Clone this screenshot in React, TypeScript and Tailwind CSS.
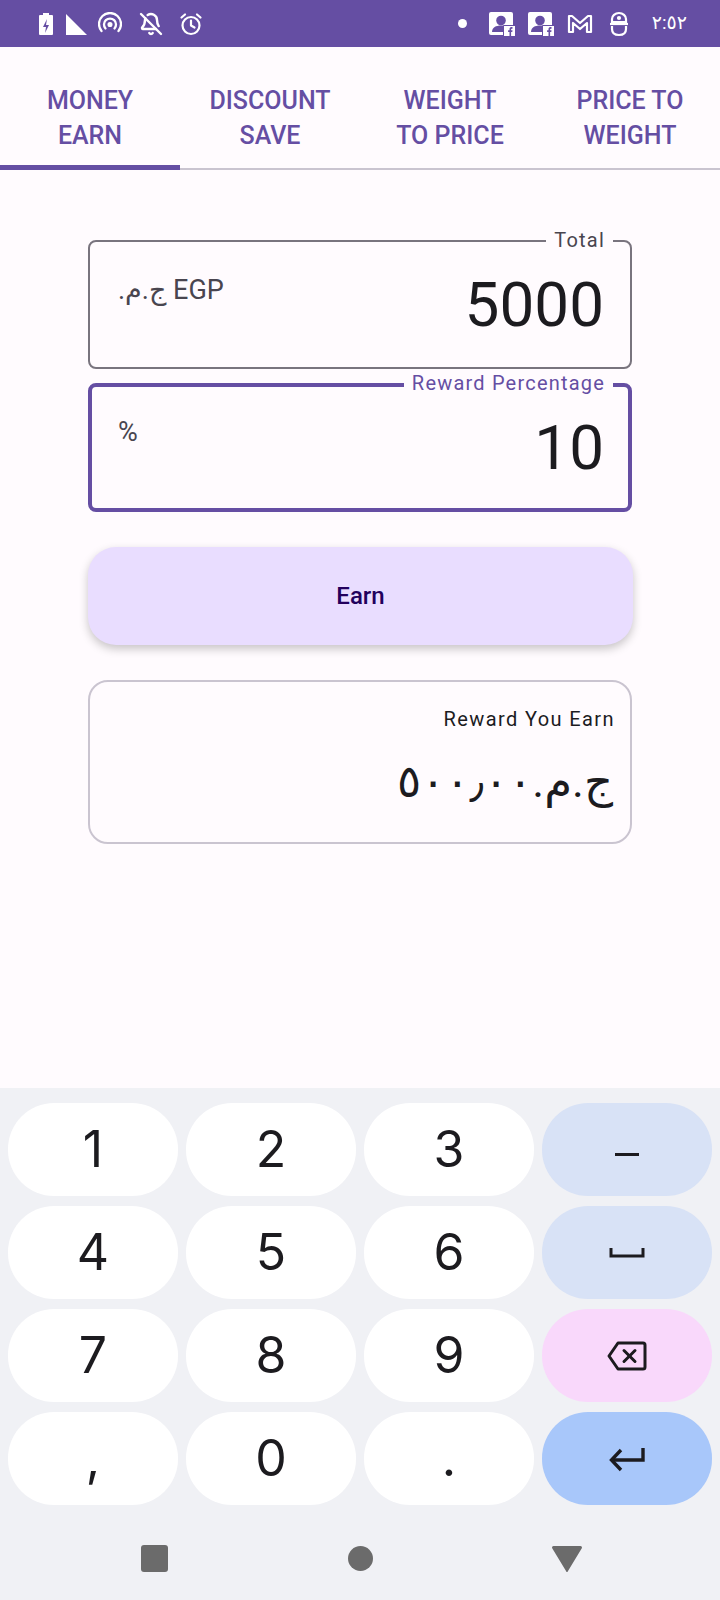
import React from 'react';
import { BellOff } from 'lucide-react';

const tabs = [
  ['MONEY', 'EARN'],
  ['DISCOUNT', 'SAVE'],
  ['WEIGHT', 'TO PRICE'],
  ['PRICE TO', 'WEIGHT'],
];

function FbContact() {
  return (
    <svg width="26" height="24" viewBox="0 0 26 24">
      <rect x="0" y="0" width="24" height="23" rx="2" fill="#fff" />
      <circle cx="12" cy="8.500" r="4.800" fill="#654ea3" />
      <path d="M3 20c0-4.500 4-6.500 9-6.500 2 0 3.500.4 5 1.200V20z" fill="#654ea3" />
      <rect x="14" y="13" width="12" height="11" rx="1" fill="#654ea3" />
      <rect x="15" y="14" width="11" height="10" fill="#fff" />
      <path d="M20.500 24v-4h-1.400v-1.700h1.400v-1.200c0-1.300.8-2 2-2h1v1.600h-.7c-.5 0-.7.2-.7.6v1h1.400l-.2 1.700h-1.200v4z" fill="#654ea3" />
    </svg>
  );
}

function StatusBar() {
  return (
    <div className="h-[47px] bg-[#654ea3] flex items-center pl-[38px] pr-[33px] text-white shrink-0">
      <svg width="16" height="24" viewBox="0 0 16 24">
        <path d="M5 1h6v2h3a1 1 0 0 1 1 1v18a1 1 0 0 1-1 1H2a1 1 0 0 1-1-1V4a1 1 0 0 1 1-1h3z" fill="#fff" />
        <path d="M9 7l-4 8h3l-1 6 4-8H8z" fill="#654ea3" />
      </svg>
      <svg className="ml-[10px]" width="24" height="24" viewBox="0 0 24 24">
        <path d="M2 2l21 21H2z" fill="#fff" />
      </svg>
      <svg className="ml-[10px]" width="24" height="24" viewBox="0 0 24 24" fill="none" stroke="#fff" strokeWidth="2.300" strokeLinecap="round">
        <path d="M3.500 19a11 11 0 1 1 17 0" />
        <path d="M7.500 16.500a6 6 0 1 1 9 0" />
        <circle cx="12" cy="12.500" r="1.400" fill="#fff" />
      </svg>
      <BellOff className="ml-[17px]" size={24} strokeWidth={2.400} />
      <svg className="ml-[16px]" width="24" height="24" viewBox="0 0 24 24" fill="none" stroke="#fff" strokeWidth="2.200" strokeLinecap="round" strokeLinejoin="round">
        <circle cx="12" cy="13.500" r="8.500" />
        <path d="M12 8.500v5l3.500 2" />
        <path d="M2.500 5.500L6 2.500" />
        <path d="M21.500 5.500L18 2.500" />
      </svg>
      <div className="flex-1" />
      <div className="w-[9px] h-[9px] rounded-full bg-white mr-[22px]" />
      <FbContact />
      <div className="w-[13px]" />
      <FbContact />
      <svg className="ml-[13px]" width="26" height="24" viewBox="0 0 26 24" fill="none" stroke="#fff" strokeWidth="2.200" strokeLinejoin="round">
        <path d="M2 4h3l8 7 8-7h3v16h-4V11l-7 6-7-6v9H2z" />
      </svg>
      <svg className="ml-[17px]" width="18" height="26" viewBox="0 0 18 26" fill="none" stroke="#fff" strokeWidth="2.200">
        <path d="M2 8c0-3 3-6 7-6s7 3 7 6v3H2z" />
        <path d="M2 15v3c0 4 3 6 7 6s7-2 7-6v-3" />
        <path d="M0 13h18" />
        <circle cx="9" cy="7" r="1" fill="#fff" />
      </svg>
      <span className="ml-[24px] text-[19px] tracking-[1px]">٢:٥٢</span>
    </div>
  );
}

function Tabs() {
  return (
    <div className="flex h-[123px] border-b-2 border-[#cac4d0] shrink-0">
      {tabs.map((t, i) => (
        <div key={i} className="relative w-[180px] pt-[36px] text-center text-[#654ea3] text-[25px] leading-[35px] font-medium">
          <div>{t[0]}</div>
          <div>{t[1]}</div>
          {i === 0 && <div className="absolute left-0 right-0 bottom-[-2px] h-[5px] bg-[#654ea3]" />}
        </div>
      ))}
    </div>
  );
}

function Field({ label, prefix, value, focused }: { label: string; prefix: string; value: string; focused?: boolean }) {
  return (
    <div className={`relative h-[129px] rounded-[8px] flex justify-between ${focused ? 'border-[4px] border-[#654ea3] pl-[26px] pr-[24px]' : 'border-2 border-[#79747e] pl-[28px] pr-[26px]'}`}>
      <span className={`absolute px-[8px] bg-[#fffbfe] text-[20px] leading-[24px] tracking-[1.200px] ${focused ? 'right-[15px] top-[-16px] text-[#654ea3]' : 'right-[17px] top-[-14px] text-[#49454f]'}`}>
        {label}
      </span>
      <span className={`text-[#49454f] text-[27px] leading-[32px] ${focused ? 'pt-[29px]' : 'pt-[32px]'}`}>{prefix}</span>
      <span className={`text-[#1c1b1f] text-[62px] leading-[76px] ${focused ? 'pt-[23px]' : 'pt-[25px]'}`}>{value}</span>
    </div>
  );
}

const keys: { label?: string; icon?: React.ReactNode; bg: string }[] = [
  { label: '1', bg: 'bg-white' },
  { label: '2', bg: 'bg-white' },
  { label: '3', bg: 'bg-white' },
  { icon: <div className="w-[24px] h-[3px] mt-[9px] bg-[#1c1b1f]" />, bg: 'bg-[#d8e2f6]' },
  { label: '4', bg: 'bg-white' },
  { label: '5', bg: 'bg-white' },
  { label: '6', bg: 'bg-white' },
  {
    icon: (
      <svg width="36" height="14" viewBox="0 0 36 14" fill="none" stroke="#1c1b1f" strokeWidth="3">
        <path d="M2 2v8h32V2" />
      </svg>
    ),
    bg: 'bg-[#d8e2f6]',
  },
  { label: '7', bg: 'bg-white' },
  { label: '8', bg: 'bg-white' },
  { label: '9', bg: 'bg-white' },
  {
    icon: (
      <svg width="40" height="30" viewBox="0 0 40 30" fill="none" stroke="#1c1b1f" strokeWidth="3" strokeLinejoin="round" strokeLinecap="round">
        <path d="M11 2h25a2 2 0 0 1 2 2v22a2 2 0 0 1-2 2H11L2 15z" />
        <path d="M17 9.500l11 11" />
        <path d="M28 9.500l-11 11" />
      </svg>
    ),
    bg: 'bg-[#f9d8fb]',
  },
  { label: ',', bg: 'bg-white' },
  { label: '0', bg: 'bg-white' },
  { label: '.', bg: 'bg-white' },
  {
    icon: (
      <svg width="38" height="28" viewBox="0 0 38 28" fill="none" stroke="#1c1b1f" strokeWidth="3.400">
        <path d="M35 3v12H4" />
        <path d="M13 5l-9.500 10 9.500 10" />
      </svg>
    ),
    bg: 'bg-[#a8c7fa]',
  },
];

function Keyboard() {
  return (
    <div className="flex-1 bg-[#f0f1f5] pt-[15px] px-[8px] flex flex-col">
      <div className="grid grid-cols-4 gap-x-[8px] gap-y-[10px] auto-rows-[93px]">
        {keys.map((k, i) => (
          <div key={i} className={`${k.bg} rounded-[46px] flex items-center justify-center text-[#1c1b1f] text-[50px] font-normal font-['Inter',sans-serif]`}>
            {k.label}
            {k.icon}
          </div>
        ))}
      </div>
      <div className="flex-1 flex items-center justify-between pl-[133px] pr-[130px] pt-[12px]">
        <div className="w-[27px] h-[27px] rounded-[3px] bg-[#6b6b6b]" />
        <div className="w-[25px] h-[25px] rounded-full bg-[#6b6b6b]" />
        <svg width="30" height="26" viewBox="0 0 30 26">
          <path d="M1.500 0h27a1.500 1.500 0 0 1 1.300 2.200L16 25a1 1 0 0 1-2 0L.2 2.200A1.500 1.500 0 0 1 1.500 0z" fill="#6b6b6b" />
        </svg>
      </div>
    </div>
  );
}

export default function App() {
  return (
    <div className="w-[720px] h-[1600px] flex flex-col bg-[#fffbfe] font-['Roboto','DejaVu_Sans',sans-serif] overflow-hidden">
      <StatusBar />
      <Tabs />
      <div className="h-[918px] px-[88px] pt-[70px] shrink-0">
        <div className="flex flex-col gap-[14px]">
          <Field label="Total" prefix="ج.م.‏ EGP" value="5000" />
          <Field label="Reward Percentage" prefix="%" value="10" focused />
        </div>
        <button className="mt-[35px] w-[545px] h-[98px] rounded-[28px] bg-[#e9ddff] text-[#22005d] text-[24px] font-medium shadow-[0_4px_10px_rgba(0,0,0,0.22)] block">
          Earn
        </button>
        <div className="mt-[35px] h-[164px] rounded-[20px] border-2 border-[#cac4d0] pr-[17px] pt-[24px] text-right text-[#1c1b1f]">
          <div className="text-[20px] leading-[26px] tracking-[1.400px] mr-[-2px]">Reward You Earn</div>
          <div className="mt-[18px] text-[45px] leading-[64px]" dir="rtl">ج.م.‏٥٠٠٫٠٠</div>
        </div>
      </div>
      <Keyboard />
    </div>
  );
}
